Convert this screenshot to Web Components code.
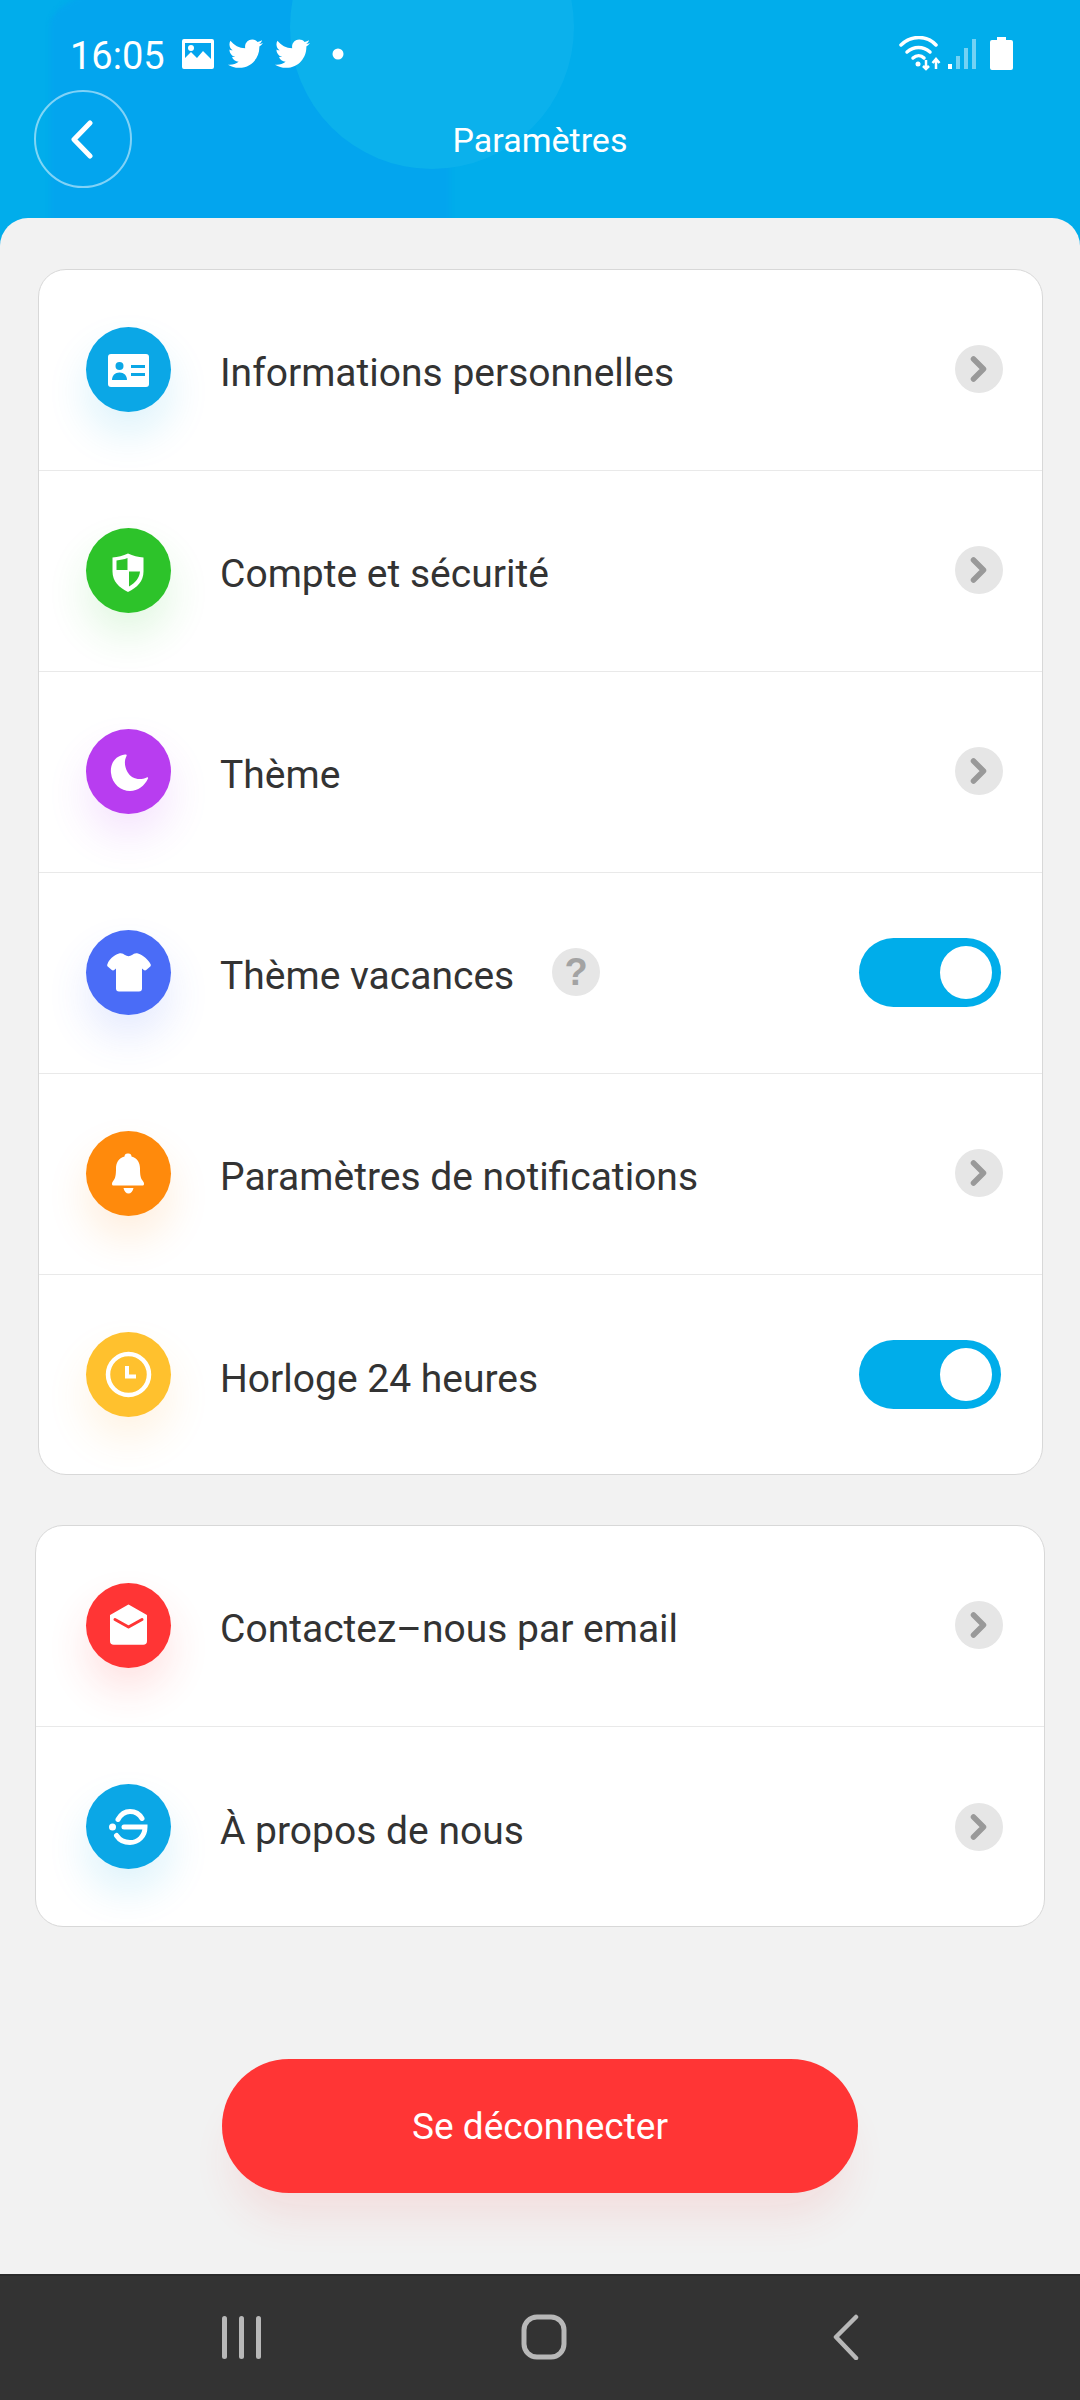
<!DOCTYPE html>
<html>
<head>
<meta charset="utf-8">
<style>
  html, body { margin: 0; padding: 0; }
  body { width: 1080px; height: 2400px; font-family: Roboto, "Liberation Sans", sans-serif; background: #f2f2f2; overflow: hidden; }
  settings-screen { height: 2400px; }
</style>
</head>
<body>
<settings-screen>
  <app-header slot="header" title="Paramètres"></app-header>
  <settings-card style="margin: 0 37px 50px 38px">
    <settings-row label="Informations personnelles" color="#0ba7e6" shadow="11,167,230" icon="card"></settings-row>
    <settings-row label="Compte et sécurité" color="#2dc32a" shadow="45,195,42" icon="shield"></settings-row>
    <settings-row label="Thème" color="#b83df0" shadow="184,61,240" icon="moon"></settings-row>
    <settings-row label="Thème vacances" color="#4a6cf7" shadow="74,108,247" icon="shirt" help toggle></settings-row>
    <settings-row label="Paramètres de notifications" color="#ff8a0c" shadow="255,138,12" icon="bell"></settings-row>
    <settings-row label="Horloge 24 heures" color="#ffc12e" shadow="255,170,60" icon="clock" toggle last></settings-row>
  </settings-card>
  <settings-card style="margin: 0 35px">
    <settings-row label="Contactez–nous par email" color="#ff3535" shadow="255,53,53" icon="mail" inset="50" pad="41"></settings-row>
    <settings-row label="À propos de nous" color="#0ba7e6" shadow="11,167,230" icon="logo" inset="50" pad="41" last></settings-row>
  </settings-card>
  <logout-button>Se déconnecter</logout-button>
  <nav-bar slot="nav"></nav-bar>
</settings-screen>

<script>
// glyphs are drawn in a 57x57 box centred on the 85px circle, C = the circle colour
const ICONS = {
  card: `<rect x="8" y="13" width="41" height="33" rx="3" fill="#fff"/>
    <circle cx="19.500" cy="25" r="4" fill="C"/><path d="M12 39c0-4.500 3-7.500 7.500-7.500S27 34.500 27 39z" fill="C"/>
    <rect x="31" y="24" width="14" height="3" fill="C"/><rect x="31" y="32" width="14" height="3" fill="C"/>`,
  shield: `<path d="M28 11.500c5 2.500 10 3.500 15.500 4v14c0 10-6.500 16-15.500 20.500C19 45.500 12.500 39.500 12.500 29.500v-14c5.500-.5 10.500-1.500 15.500-4z" fill="#fff"/>
    <path d="M27.500 16v12H16.500V18.500c4-.4 7.500-1.200 11-2.500zM29 29.500h11c-.5 6.500-4.500 11-11 15z" fill="C"/>`,
  moon: `<path d="M25 11.500C14 13 10 22 11 30c1 11 10 18 19 18 8 0 14.500-5 18-12.500.5-1-.3-1.500-1.300-1C39 38 31 35.500 27.500 29c-3-5.500-3.500-11-1-16 .5-1 .2-1.700-1.500-1.500z" fill="#fff"/>`,
  shirt: `<path d="M19 9.500c2.500-.9 4.500.3 6 1.500 2 1.500 5 1.500 7 0 1.500-1.200 3.500-2.400 6-1.500 5.500 2 10 6 12.500 10.500.6 1.200.4 2-.5 2.800l-3.500 3c-1 .8-2 .8-3 0l-1.500-1.300v20c0 2-1 3-3 3H19c-2 0-3-1-3-3v-20l-1.500 1.300c-1 .8-2 .8-3 0l-3.500-3c-.9-.8-1.100-1.600-.5-2.800C9 15.500 13.500 11.500 19 9.500z" fill="#fff"/>`,
  bell: `<path d="M28.500 8.500c1.800 0 3 1.200 3 3 6 1.500 8.500 6.500 8.500 12 0 6 .5 9.500 2.500 12 1 1.300 1.500 2 1.500 3.500 0 1-.7 1.500-1.700 1.500H13.700c-1 0-1.700-.5-1.700-1.500 0-1.500.5-2.200 1.500-3.500 2-2.500 2.500-6 2.500-12 0-5.500 2.500-10.500 8.500-12 0-1.800 1.200-3 3-3zM23.500 43h10c-.6 3.500-2.700 5.500-5 5.500s-4.400-2-5-5.500z" fill="#fff"/>`,
  clock: `<circle cx="28.500" cy="28.500" r="20.500" fill="none" stroke="#fff" stroke-width="4.500"/>
    <path d="M27 20v10.500h9" fill="none" stroke="#fff" stroke-width="4"/>`,
  mail: `<path d="M28.500 8.500 46 18.500V44c0 1.800-1 2.800-2.800 2.800H13.800C12 46.800 11 45.800 11 44V18.500z" fill="#fff" stroke="#fff" stroke-width="2" stroke-linejoin="round"/>
    <path d="M15 22.500l13.500 7.500L42 22.500" fill="none" stroke="C" stroke-width="3" stroke-linecap="round" stroke-linejoin="round"/>`,
  logo: `<path d="M18 21.500C21 16 25 13.500 30 13.500c5 0 9.500 2.500 12 7M16.500 37.500C19.500 42 24.500 44.500 30 44.500c8.500 0 15-6.500 15-15.500H24" fill="none" stroke="#fff" stroke-width="5" stroke-linecap="round"/>
    <circle cx="12.500" cy="29" r="3.500" fill="#fff"/>`
}

const BIRD = 'M24 2.400c-.9.400-1.800.700-2.800.800 1-.6 1.800-1.600 2.200-2.700-1 .6-2 1-3.100 1.200C19.300.700 18 .100 16.600.100c-2.700 0-4.900 2.200-4.900 4.900 0 .4 0 .8.100 1.100C7.700 5.900 4.100 4 1.700.9 1.200 1.700 1 2.500 1 3.400c0 1.700.900 3.200 2.200 4.100-.8 0-1.600-.2-2.200-.6v.1c0 2.400 1.700 4.400 3.900 4.800-.4.100-.8.200-1.300.2-.3 0-.6 0-.9-.1.600 2 2.400 3.400 4.600 3.400-1.700 1.300-3.800 2.100-6.100 2.100-.4 0-.8 0-1.200-.1 2.200 1.400 4.800 2.200 7.500 2.200 9.100 0 14-7.500 14-14v-.6c1-.7 1.800-1.600 2.500-2.500z'

class SettingsScreen extends HTMLElement {
  constructor() {
    super()
    this.attachShadow({ mode: 'open' })
    this.shadowRoot.innerHTML = `
      <style>
        :host { display: flex; flex-direction: column; }
        .sheet { flex: 1; background: #f2f2f2; border-radius: 28px 28px 0 0; margin-top: -28px; padding-top: 51px; display: flex; flex-direction: column; position: relative; }
      </style>
      <slot name="header"></slot>
      <div class="sheet"><slot></slot></div>
      <slot name="nav"></slot>
    `
  }
}

class AppHeader extends HTMLElement {
  constructor() {
    super()
    this.attachShadow({ mode: 'open' })
  }
  connectedCallback() {
    this.shadowRoot.innerHTML = `
      <style>
        :host { display: block; height: 246px; background: #01adeb; position: relative; overflow: hidden; color: #fff; }
        .blob { position: absolute; left: 50px; top: -30px; width: 400px; height: 280px; background: #03a5ee; border-radius: 50% 50% 0 0 / 20% 20% 0 0; filter: blur(2px); }
        .blob2 { position: absolute; left: 290px; top: -115px; width: 284px; height: 284px; border-radius: 50%; background: #0bb1ec; }
        .status { position: relative; height: 90px; display: flex; align-items: center; padding: 0 67px 0 70px; box-sizing: border-box; }
        .time { font-size: 38px; line-height: 38px; margin-top: 21px; }
        .status svg { display: block; margin-top: 17px; }
        .left { display: flex; align-items: center; flex: 1; }
        .bar { position: relative; display: flex; align-items: center; padding-left: 34px; height: 98px; }
        .back { width: 98px; height: 98px; box-sizing: border-box; border: 2px solid rgba(255,255,255,.5); border-radius: 50%; display: flex; align-items: center; justify-content: center; }
        .back svg { margin-left: -2px; }
        .title { position: absolute; left: 0; right: 0; top: 1px; height: 98px; line-height: 98px; text-align: center; font-size: 34px; }
      </style>
      <div class="blob"></div>
      <div class="blob2"></div>
      <div class="status">
        <div class="left">
          <span class="time">16:05</span>
          <svg style="margin-left:17px" width="32" height="30" viewBox="0 0 32 30"><path fill-rule="evenodd" d="M2 0h28a2 2 0 0 1 2 2v26a2 2 0 0 1-2 2H2a2 2 0 0 1-2-2V2a2 2 0 0 1 2-2zm1 4v15l6-6 6 6 6-7 8 8V4z" fill="#fff"/><circle cx="9" cy="9" r="3" fill="#fff"/></svg>
          <svg style="margin-left:14px" width="35" height="30" viewBox="0 0 24 20"><path d="${BIRD}" fill="#fff"/></svg>
          <svg style="margin-left:12px" width="35" height="30" viewBox="0 0 24 20"><path d="${BIRD}" fill="#fff"/></svg>
          <svg style="margin-left:22px" width="12" height="12" viewBox="0 0 12 12"><circle cx="6" cy="6" r="5.500" fill="#fff"/></svg>
        </div>
        <svg width="44" height="36" viewBox="0 0 44 36"><g fill="none" stroke="#fff" stroke-width="3.500" stroke-linecap="round"><path d="M2 9c10-10 26-10 35 0"/><path d="M8 16c7-6 16-6 23 0"/><path d="M14 22c3.500-3 8-3 11 0"/></g><circle cx="19" cy="28" r="2.500" fill="#fff"/><path d="M27 24v9m-3-3l3 3 3-3M37 33v-10m-3.500 4l3.500-4 3.500 4" fill="none" stroke="#fff" stroke-width="2.500"/></svg>
        <svg style="margin-left:5px" width="30" height="32" viewBox="0 0 30 32"><rect x="0" y="26" width="4" height="5" fill="#fff"/><rect x="8" y="18" width="4" height="13" fill="#fff" opacity=".45"/><rect x="16" y="10" width="4" height="21" fill="#fff" opacity=".45"/><rect x="24" y="1" width="4" height="30" fill="#fff" opacity=".45"/></svg>
        <svg style="margin-left:12px" width="23" height="33" viewBox="0 0 23 33"><path d="M7 0h9v3h5a2 2 0 0 1 2 2v26a2 2 0 0 1-2 2H2a2 2 0 0 1-2-2V5a2 2 0 0 1 2-2h5z" fill="#fff"/></svg>
      </div>
      <div class="bar">
        <div class="back"><svg width="24" height="39" viewBox="0 0 24 39"><path d="M20 3 4 19.500 20 36" fill="none" stroke="#fff" stroke-width="5" stroke-linecap="round" stroke-linejoin="round"/></svg></div>
        <div class="title">${this.getAttribute('title')}</div>
      </div>
    `
  }
}

class SettingsCard extends HTMLElement {
  constructor() {
    super()
    this.attachShadow({ mode: 'open' })
    this.shadowRoot.innerHTML = `
      <style>
        :host { display: block; background: #fff; border: 1.500px solid #d8d8d8; border-radius: 28px; overflow: hidden; }
      </style>
      <slot></slot>
    `
  }
}

class SettingsRow extends HTMLElement {
  constructor() {
    super()
    this.attachShadow({ mode: 'open' })
  }
  connectedCallback() {
    const color = this.getAttribute('color')
    const rgb = this.getAttribute('shadow')
    const inset = this.getAttribute('inset') || 47
    const last = this.hasAttribute('last')
    const pad = this.hasAttribute('toggle') ? 41 : (this.getAttribute('pad') || 39)
    const glyph = ICONS[this.getAttribute('icon')].replace(/"C"/g, `"${color}"`)
    const action = this.hasAttribute('toggle') ? '<toggle-switch></toggle-switch>' : '<round-hint kind="chevron"></round-hint>'
    const help = this.hasAttribute('help') ? '<round-hint kind="help" style="margin-left:38px"></round-hint>' : ''
    this.shadowRoot.innerHTML = `
      <style>
        :host { display: flex; align-items: center; height: ${last ? 199 : 201}px; padding: 0 ${pad}px ${last ? 0 : 2}px ${inset}px; box-sizing: border-box; border-bottom: ${last ? 0 : 1}px solid #e9e9e9; }
        .icon { width: 85px; height: 85px; border-radius: 50%; background: ${color}; box-shadow: 0 22px 42px rgba(${rgb},.14); flex: none; display: flex; align-items: center; justify-content: center; }
        .label { font-size: 39px; color: #333; margin: 8px 0 0 49px; white-space: nowrap; }
        .spacer { flex: 1; }
      </style>
      <div class="icon"><svg width="57" height="57" viewBox="0 0 57 57">${glyph}</svg></div>
      <span class="label">${this.getAttribute('label')}</span>
      ${help}
      <span class="spacer"></span>
      ${action}
    `
  }
}

class RoundHint extends HTMLElement {
  constructor() {
    super()
    this.attachShadow({ mode: 'open' })
  }
  connectedCallback() {
    const glyph = this.getAttribute('kind') === 'help'
      ? '<span class="q">?</span>'
      : '<svg width="48" height="48" viewBox="0 0 48 48"><path d="M18.500 14 28.500 24 18.500 34" fill="none" stroke="#999" stroke-width="5.500" stroke-linecap="round" stroke-linejoin="round"/></svg>'
    this.shadowRoot.innerHTML = `
      <style>
        :host { display: inline-flex; width: 48px; height: 48px; border-radius: 50%; background: #e6e6e6; align-items: center; justify-content: center; flex: none; }
        .q { font: 700 38px/48px "Liberation Sans", sans-serif; color: #a3a3a3; }
        svg { display: block; }
      </style>
      ${glyph}
    `
  }
}

class ToggleSwitch extends HTMLElement {
  constructor() {
    super()
    this.attachShadow({ mode: 'open' })
    this.shadowRoot.innerHTML = `
      <style>
        :host { display: flex; justify-content: flex-end; align-items: center; width: 142px; height: 69px; box-sizing: border-box; padding-right: 9px; border-radius: 35px; background: #00adea; flex: none; }
        .knob { width: 52px; height: 53px; border-radius: 50%; background: #fff; }
      </style>
      <div class="knob"></div>
    `
  }
}

class LogoutButton extends HTMLElement {
  constructor() {
    super()
    this.attachShadow({ mode: 'open' })
    this.shadowRoot.innerHTML = `
      <style>
        :host { display: flex; align-items: center; justify-content: center; align-self: center; width: 636px; height: 134px; margin-top: 132px; background: #ff3535; color: #fff; font-size: 37px; border-radius: 67px; box-shadow: 0 34px 44px -12px rgba(255,53,53,.11); }
      </style>
      <slot></slot>
    `
  }
}

class NavBar extends HTMLElement {
  constructor() {
    super()
    this.attachShadow({ mode: 'open' })
    this.shadowRoot.innerHTML = `
      <style>
        :host { display: block; height: 126px; background: #333; border-top: 2px solid #2b2b2b; box-sizing: border-box; flex: none; }
        .row { display: grid; grid-template-columns: 221px 300px 312px 1fr; height: 100%; padding-top: 38px; box-sizing: border-box; }
        svg { display: block; }
      </style>
      <div class="row">
        <span></span>
        <svg width="42" height="46" viewBox="0 0 42 46"><g fill="#b8b8b8"><rect x="1" y="2" width="5" height="43" rx="2.500"/><rect x="18" y="2" width="5" height="43" rx="2.500"/><rect x="35" y="2" width="5" height="43" rx="2.500"/></g></svg>
        <svg width="46" height="46" viewBox="0 0 46 46"><rect x="3" y="3" width="40" height="40" rx="13" fill="none" stroke="#b8b8b8" stroke-width="5"/></svg>
        <svg width="28" height="46" viewBox="0 0 28 46"><path d="M23 3 3 23 23 44" fill="none" stroke="#b8b8b8" stroke-width="4.500" stroke-linecap="round" stroke-linejoin="round"/></svg>
      </div>
    `
  }
}

customElements.define('settings-screen', SettingsScreen)
customElements.define('app-header', AppHeader)
customElements.define('settings-card', SettingsCard)
customElements.define('settings-row', SettingsRow)
customElements.define('round-hint', RoundHint)
customElements.define('toggle-switch', ToggleSwitch)
customElements.define('logout-button', LogoutButton)
customElements.define('nav-bar', NavBar)
</script>
</body>
</html>
